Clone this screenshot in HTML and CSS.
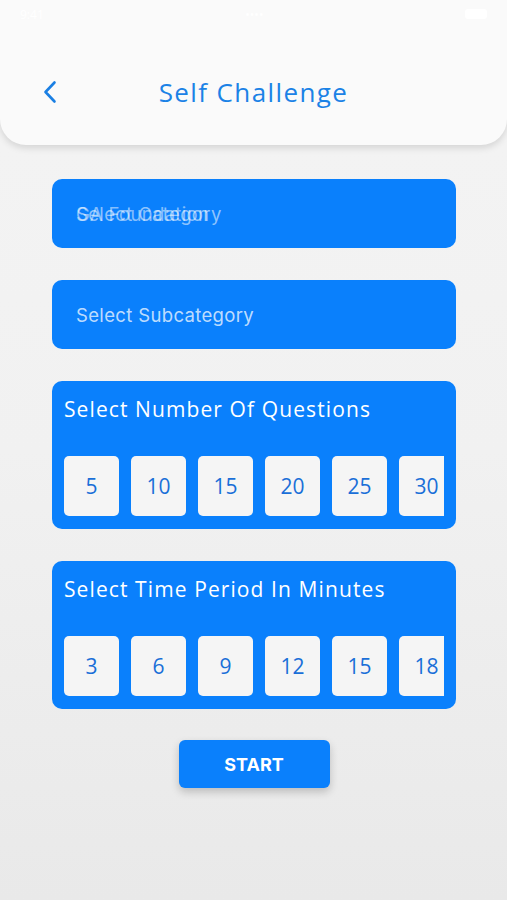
FILE: index.html
```html
<!DOCTYPE html>
<html>
<head>
<meta charset="utf-8">
<link rel="stylesheet" href="styles.css">
</head>
<body>
<div class="screen">
  <header class="header">
    <div class="status">
      <span class="st-time">9:41</span>
      <span class="st-mid">••••</span>
      <span class="st-batt"></span>
    </div>
    <div class="nav">
      <button class="back" aria-label="Back">
        <svg width="16" height="24" viewBox="0 0 16 24"><path d="M12.5 2.5 L3.5 12 L12.5 21.5" fill="none" stroke="#1a7fe3" stroke-width="2.6" stroke-linecap="round" stroke-linejoin="round"/></svg>
      </button>
      <h1 class="title">Self Challenge</h1>
    </div>
  </header>

  <main class="content">
    <div class="field">
      <span class="ph ph-a">Select Category</span>
      <span class="ph ph-b">GA Foundation</span>
    </div>
    <div class="field">
      <span class="ph">Select Subcategory</span>
    </div>

    <section class="picker">
      <h2 class="picker-title">Select Number Of Questions</h2>
      <div class="options">
        <div class="opt">5</div>
        <div class="opt">10</div>
        <div class="opt">15</div>
        <div class="opt">20</div>
        <div class="opt">25</div>
        <div class="opt">30</div>
      </div>
    </section>

    <section class="picker">
      <h2 class="picker-title">Select Time Period In Minutes</h2>
      <div class="options">
        <div class="opt">3</div>
        <div class="opt">6</div>
        <div class="opt">9</div>
        <div class="opt">12</div>
        <div class="opt">15</div>
        <div class="opt">18</div>
      </div>
    </section>

    <div class="actions">
      <button class="start">START</button>
    </div>
  </main>
</div>
</body>
</html>
```

FILE: styles.css
```css
* { box-sizing: border-box; }
html, body { margin: 0; padding: 0; }
body {
  width: 507px;
  height: 900px;
  overflow: hidden;
  font-family: "Open Sans", "Noto Sans", sans-serif;
}
.screen {
  width: 507px;
  height: 900px;
  background: linear-gradient(180deg, #f4f4f4 0%, #f1f1f1 50%, #e9e9e9 100%);
}
.header {
  height: 145px;
  background: #fafafa;
  border-radius: 0 0 26px 26px;
  box-shadow: 0 3px 7px rgba(0,0,0,0.13);
  display: flex;
  flex-direction: column;
}
.status {
  height: 28px;
  display: flex;
  justify-content: space-between;
  align-items: center;
  padding: 0 20px;
  color: #ffffff;
  font-size: 12px;
}
.st-batt { width: 22px; height: 10px; background: #fff; border-radius: 3px; }
.nav {
  position: relative;
  height: 116px;
  display: flex;
  align-items: center;
  justify-content: center;
  padding-top: 12px;
}
.back {
  position: absolute;
  left: 40px;
  top: 50px;
  width: 20px;
  height: 28px;
  border: 0;
  padding: 0;
  background: none;
  display: flex;
  align-items: center;
  justify-content: center;
}
.title {
  margin: 0;
  font-weight: 400;
  font-size: 26px;
  color: #1b82e6;
  letter-spacing: 1.4px;
}
.content {
  padding: 34px 51px 0 52px;
  display: flex;
  flex-direction: column;
  gap: 32px;
}
.field {
  position: relative;
  height: 69px;
  background: #0a80fc;
  border-radius: 10px;
  display: flex;
  align-items: center;
  padding-left: 24px;
  font-family: "Inter", "Liberation Sans", sans-serif;
  font-size: 18.5px;
  letter-spacing: 0.35px;
}
.ph { color: rgba(255,255,255,0.74); }
.ph-a { color: rgba(255,255,255,0.55); }
.ph-b {
  position: absolute;
  left: 24px;
  top: 50%;
  transform: translateY(-50%);
  color: rgba(255,255,255,0.5);
}
.picker {
  height: 148px;
  background: #0a80fc;
  border-radius: 10px;
  padding: 14px 12px 0 12px;
}
.picker-title {
  margin: 0;
  height: 28px;
  line-height: 28px;
  font-weight: 400;
  font-size: 21px;
  letter-spacing: 1.1px;
  color: #ffffff;
}
.options {
  margin-top: 33px;
  width: 380px;
  overflow: hidden;
  display: flex;
  gap: 12px;
}
.opt {
  flex: 0 0 55px;
  height: 60px;
  background: #f5f5f5;
  border-radius: 5px;
  display: flex;
  align-items: center;
  justify-content: center;
  font-size: 21px;
  color: #1a6fd8;
}
.actions {
  display: flex;
  justify-content: center;
  margin-top: -1px;
}
.start {
  width: 151px;
  height: 48px;
  border: 0;
  border-radius: 6px;
  background: #0a80fc;
  color: #ffffff;
  font-family: "Inter", "Liberation Sans", sans-serif;
  font-weight: 700;
  font-size: 18px;
  box-shadow: 0 4px 8px rgba(0,0,0,0.2);
}
```
